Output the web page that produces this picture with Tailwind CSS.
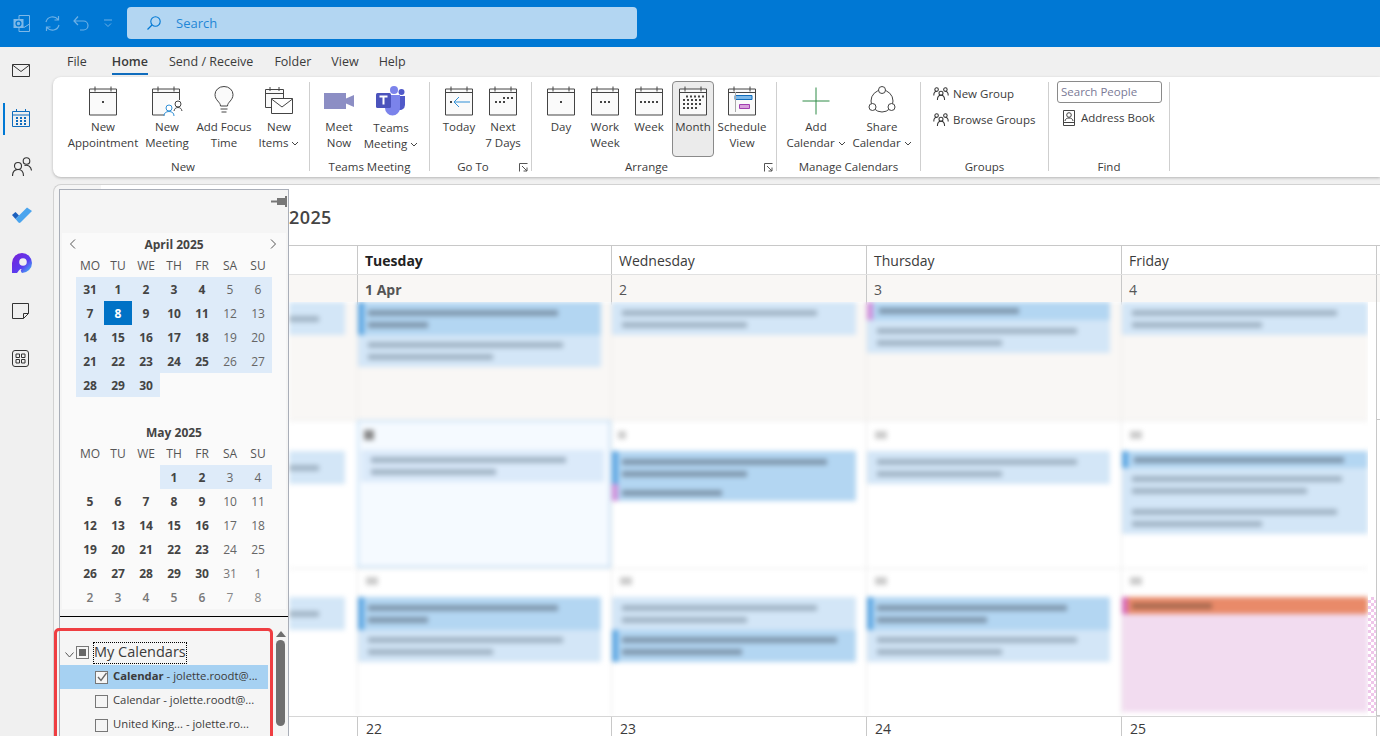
<!DOCTYPE html>
<html lang="en">
  <head>
    <meta charset="UTF-8" />
    <title>Calendar - Outlook</title>
    <script src="https://cdn.jsdelivr.net/npm/@tailwindcss/browser@4"></script>
  </head>
  <body class="h-[736px] w-[1380px] overflow-hidden bg-[#f0f0f0] font-['Open_Sans','Noto_Sans',sans-serif] text-[12px] text-[#3b3b3b]">
    <!-- Shared ribbon calendar outline -->
    <svg class="hidden">
      <symbol id="cal" viewBox="0 0 30 30">
        <path d="M2.5 5.5h27v26h-27z" transform="translate(-1 -2.5)" fill="#fafafa" stroke="#444" />
        <path d="M1.5 6.5h27M7 .5v5M23 .5v5" fill="none" stroke="#444" />
      </symbol>
      <symbol id="grp" viewBox="0 0 20 18">
        <g fill="none" stroke="#333" stroke-width="1.3">
          <circle cx="4.5" cy="3.5" r="2.2" /><circle cx="15.5" cy="3.5" r="2.2" /><circle cx="10" cy="8" r="2.5" />
          <path d="M1 11c0-3 1-5 3-5M19 11c0-3-1-5-3-5M5.5 16.5c0-3.500 2-6 4.500-6s4.500 2.500 4.500 6" />
        </g>
      </symbol>
      <symbol id="chev" viewBox="0 0 8 5"><path d="M1 1l3 3 3-3" fill="none" stroke="#444" /></symbol>
      <symbol id="launch" viewBox="0 0 9 9"><path d="M.5 8.500v-8h8M3 3l5 5M8 4.500V8H4.500" fill="none" stroke="#555" /></symbol>
    </svg>

    <!-- Title bar -->
    <header class="flex h-[47px] items-start bg-[#0078d4] pt-[7px]">
      <div class="flex h-[32px] w-[127px] items-center">
        <svg class="ml-[13px] h-[17px] w-[17px]" viewBox="0 0 17 17">
          <path d="M6 .5h10.500v16H6z" fill="none" stroke="#7db8e8" />
          <path d="M6 9l5 3.500L16.500 9" fill="none" stroke="#7db8e8" />
          <rect x=".5" y="4" width="10" height="9" fill="#7db8e8" />
          <circle cx="5.500" cy="8.500" r="2.400" fill="none" stroke="#0078d4" stroke-width="1.400" />
        </svg>
        <svg class="ml-[14px] h-[17px] w-[17px]" viewBox="0 0 17 17">
          <path d="M2 7a6.800 6.800 0 0 1 12-2.500M15 10a6.800 6.800 0 0 1-12 2.500M14.500 1v4h-4M2.500 16v-4h4" fill="none" stroke="#6cb0e6" stroke-width="1.200" />
        </svg>
        <svg class="ml-[12px] h-[17px] w-[17px]" viewBox="0 0 17 17">
          <path d="M1 6h9.500a4.500 4.500 0 0 1 0 9H7M5 1.500L1 6l4 4" fill="none" stroke="#6cb0e6" stroke-width="1.200" />
        </svg>
        <svg class="ml-[14px] h-[9px] w-[8px]" viewBox="0 0 8 9">
          <path d="M0 1h8M1 4.500l3 3 3-3" fill="none" stroke="#6cb0e6" />
        </svg>
      </div>
      <div class="flex h-[32px] w-[510px] items-center rounded-[4px] bg-[#b3d6f2]">
        <svg class="ml-[20px] h-[14px] w-[14px]" viewBox="0 0 14 14">
          <circle cx="8.500" cy="5.500" r="4.700" fill="none" stroke="#0078d4" stroke-width="1.100" />
          <path d="M5 9L.5 13.500" stroke="#0078d4" stroke-width="1.200" />
        </svg>
        <span class="ml-[15px] pt-[2px] text-[13px] text-[#1f86d6]">Search</span>
      </div>
    </header>

    <div class="flex h-[689px]">
      <!-- App rail -->
      <nav class="relative flex w-[53px] flex-col items-center">
        <span class="absolute top-[56px] left-[3px] h-[32px] w-[2px] bg-[#0078d4]"></span>
        <div class="mr-[9px] w-[20px] pt-[17px]">
          <svg class="h-[13px] w-[18px]" viewBox="0 0 18 13"><path d="M.5.500h17v12H.500zM.5 1l8.500 6.500L17.500 1" fill="none" stroke="#333" /></svg>
        </div>
        <div class="mt-[32px] mr-[9px] w-[20px]">
          <svg class="h-[18px] w-[18px]" viewBox="0 0 18 18">
            <path d="M.5 2.500h17v15H.5zM.5 6h17M4.500 0v3M13.500 0v3" fill="none" stroke="#0f6cbd" />
            <path d="M4 8h2v2H4zM8 8h2v2H8zM12 8h2v2h-2zM4 11h2v2H4zM8 11h2v2H8zM12 11h2v2h-2zM4 14h2v2H4zM8 14h2v2H8zM12 14h2v2h-2z" fill="#0f6cbd" />
          </svg>
        </div>
        <div class="mt-[30px] mr-[9px] w-[20px]">
          <svg class="h-[20px] w-[20px]" viewBox="0 0 20 20">
            <g fill="none" stroke="#333" stroke-width="1.100"><circle cx="6" cy="9" r="3.500" /><circle cx="14.500" cy="4" r="3.300" /><path d="M.5 19c0-4 2-6.500 5.500-6.500s5.500 2.500 5.500 6.500M12.500 8.500c3.500-1 6.500 1 7 5" /></g>
          </svg>
        </div>
        <div class="mt-[30px] mr-[9px] w-[20px]">
          <svg class="h-[16px] w-[20px]" viewBox="0 0 20 16">
            <path d="M0 8l3.500-3L7 8.500 3.500 12z" fill="#1b5fbd" />
            <path d="M3.500 12L7 8.500 15 .5l5 3.500-11.500 11.500c-1 .7-1.500.5-2 0z" fill="#4aa4ee" />
          </svg>
        </div>
        <div class="mt-[30px] mr-[9px] w-[20px]">
          <svg class="h-[20px] w-[20px]" viewBox="0 0 20 20">
            <defs><linearGradient id="lp" x1="0" y1="0" x2="1" y2="1"><stop offset="0" stop-color="#7a1fd6" /><stop offset=".6" stop-color="#5a3df0" /><stop offset="1" stop-color="#3fd0f5" /></linearGradient></defs>
            <path d="M0 20V10a10 10 0 1 1 10 10c-2-2.500-1-3.500 0-4-3 0-3 2-5 4z" fill="url(#lp)" />
            <circle cx="11" cy="9" r="3.800" fill="#f0f0f0" />
          </svg>
        </div>
        <div class="mt-[30px] mr-[9px] w-[20px]">
          <svg class="h-[16px] w-[17px]" viewBox="0 0 17 16"><path d="M.5.500h16v10l-5 5H.5zM16.500 10.500h-5v5" fill="none" stroke="#333" /></svg>
        </div>
        <div class="mt-[31px] mr-[9px] w-[20px]">
          <svg class="h-[17px] w-[17px]" viewBox="0 0 17 17"><rect x=".5" y=".5" width="16" height="16" rx="2.500" fill="none" stroke="#333" /><path d="M4 4h3.500v3.500H4zM9.500 4H13v3.500H9.500zM4 9.500h3.500V13H4zM9.500 9.500H13V13H9.500z" fill="none" stroke="#333" /></svg>
        </div>
      </nav>

      <div class="flex min-w-0 flex-1 flex-col">
        <!-- Tabs -->
        <div class="flex h-[30px] shrink-0 text-[12.500px] leading-[30px] text-[#3b3b3b]">
          <span class="ml-[14px]">File</span>
          <span class="relative ml-[25px] font-semibold">Home<span class="absolute right-0 bottom-[2px] left-0 h-[2px] bg-[#0f6cbd]"></span></span>
          <span class="ml-[21px]">Send / Receive</span>
          <span class="ml-[21px]">Folder</span>
          <span class="ml-[20px]">View</span>
          <span class="ml-[20px]">Help</span>
        </div>

        <!-- Ribbon -->
        <div class="flex h-[100px] shrink-0 rounded-l-[8px] bg-white pt-[5px] text-[11.500px] leading-[16px] shadow-[0_1px_3px_rgba(0,0,0,0.25)]">
          <section class="flex h-[89px] w-[257px] flex-col border-r border-[#cfcfcf] pl-[12px]">
            <div class="flex flex-1">
              <div class="flex w-[76px] flex-col items-center pt-[4px]">
                <svg class="h-[30px] w-[30px]" viewBox="0 0 30 30"><use href="#cal" /><rect x="14" y="15" width="2" height="2" fill="#444" /></svg>
                <span class="mt-[3px] text-center">New<br />Appointment</span>
              </div>
              <div class="flex w-[52px] flex-col items-center pt-[4px]">
                <svg class="h-[30px] w-[32px]" viewBox="0 0 32 30">
                  <use href="#cal" width="30" height="30" />
                  <rect x="17" y="14" width="15" height="16" fill="#fff" />
                  <circle cx="18" cy="22" r="3" fill="#fff" stroke="#2f8fd6" /><path d="M13 30c0-3 2-4.500 5-4.500s5 1.500 5 4.500" fill="#fff" stroke="#2f8fd6" />
                  <circle cx="27" cy="18" r="3" fill="none" stroke="#444" /><path d="M23 25c.5-2.500 2-3.500 4-3.500s3.500 1 4 3.500" fill="none" stroke="#444" />
                </svg>
                <span class="mt-[3px] text-center">New<br />Meeting</span>
              </div>
              <div class="flex w-[62px] flex-col items-center pt-[4px]">
                <svg class="h-[30px] w-[22px]" viewBox="0 0 22 30">
                  <path d="M7.500 20c0-4-5.500-5.500-5.500-11.500a9 8 0 0 1 18 0c0 6-5.500 7.500-5.500 11.500zM7.500 23h7M8.500 26h5" fill="#fafafa" stroke="#444" />
                </svg>
                <span class="mt-[3px] text-center whitespace-nowrap">Add Focus<br />Time</span>
              </div>
              <div class="flex w-[48px] flex-col items-center pt-[4px]">
                <svg class="h-[30px] w-[30px]" viewBox="0 0 30 30">
                  <path d="M1.500 3.500h18v18h-18zM1.500 7.500h18M6 1v4M15 1v4" fill="#fafafa" stroke="#444" />
                  <path d="M7.500 12.500h21v15h-21z" fill="#fff" stroke="#444" /><path d="M7.500 13l10.500 8 10.500-8" fill="none" stroke="#444" />
                </svg>
                <span class="mt-[3px] text-center whitespace-nowrap">New<br />Items <svg class="inline h-[5px] w-[8px]"><use href="#chev" /></svg></span>
              </div>
            </div>
            <div class="-mb-[4px] h-[16px] pr-[8px] text-center">New</div>
          </section>

          <section class="flex h-[89px] w-[120px] flex-col border-r border-[#cfcfcf] pl-[4px]">
            <div class="flex flex-1">
              <div class="flex w-[50px] flex-col items-center pt-[4px]">
                <svg class="h-[30px] w-[30px]" viewBox="0 0 30 30"><rect y="7" width="22" height="16" fill="#8c8ec4" /><path d="M22 12.500l8-3.500v12l-8-3.500z" fill="#8c8ec4" /></svg>
                <span class="mt-[3px] text-center">Meet<br />Now</span>
              </div>
              <div class="flex w-[54px] flex-col items-center pt-[4px]">
                <svg class="h-[30px] w-[30px]" viewBox="0 0 30 30">
                  <circle cx="18" cy="4" r="4" fill="#7b83eb" /><circle cx="25.500" cy="6" r="3" fill="#5059c9" />
                  <path d="M21 10h8v9a5 5 0 0 1-8 4z" fill="#5059c9" /><path d="M9 9h15v13a7.500 7.500 0 0 1-15 0z" fill="#7b83eb" />
                  <rect y="7" width="15" height="15" rx="1.500" fill="#4b53bc" />
                  <path d="M3.500 10.500h8M7.500 10.500v8" stroke="#fff" stroke-width="2" fill="none" />
                </svg>
                <span class="mt-[4px] text-center whitespace-nowrap">Teams<br />Meeting <svg class="inline h-[5px] w-[8px]"><use href="#chev" /></svg></span>
              </div>
            </div>
            <div class="-mb-[4px] h-[16px] pr-[4px] text-center whitespace-nowrap">Teams Meeting</div>
          </section>

          <section class="relative flex h-[89px] w-[102px] flex-col border-r border-[#cfcfcf] pl-[7px]">
            <div class="flex flex-1">
              <div class="flex w-[44px] flex-col items-center pt-[4px]">
                <svg class="h-[30px] w-[30px]" viewBox="0 0 30 30"><use href="#cal" /><rect x="6" y="15" width="2" height="2" fill="#444" /><path d="M26 16H10M15 11l-5 5 5 5" fill="none" stroke="#2f8fd6" /></svg>
                <span class="mt-[3px] text-center">Today</span>
              </div>
              <div class="flex w-[44px] flex-col items-center pt-[4px]">
                <svg class="h-[30px] w-[30px]" viewBox="0 0 30 30"><use href="#cal" /><path d="M15 11h2v2h-2zM19 11h2v2h-2zM23 11h2v2h-2zM7 15h2v2H7zM11 15h2v2h-2zM15 15h2v2h-2z" fill="#444" /></svg>
                <span class="mt-[3px] text-center whitespace-nowrap">Next<br />7 Days</span>
              </div>
            </div>
            <div class="-mb-[4px] h-[16px] pr-[22px] text-center whitespace-nowrap">Go To</div>
            <svg class="absolute right-[3px] bottom-[-1px] h-[9px] w-[9px]"><use href="#launch" /></svg>
          </section>

          <section class="relative flex h-[89px] w-[245px] flex-col border-r border-[#cfcfcf] pl-[7px]">
            <div class="flex flex-1">
              <div class="flex w-[44px] flex-col items-center pt-[4px]">
                <svg class="h-[30px] w-[30px]" viewBox="0 0 30 30"><use href="#cal" /><rect x="14" y="15" width="2" height="2" fill="#444" /></svg>
                <span class="mt-[3px] text-center">Day</span>
              </div>
              <div class="flex w-[44px] flex-col items-center pt-[4px]">
                <svg class="h-[30px] w-[30px]" viewBox="0 0 30 30"><use href="#cal" /><path d="M10 15h2v2h-2zM14 15h2v2h-2zM18 15h2v2h-2z" fill="#444" /></svg>
                <span class="mt-[3px] text-center">Work<br />Week</span>
              </div>
              <div class="flex w-[44px] flex-col items-center pt-[4px]">
                <svg class="h-[30px] w-[30px]" viewBox="0 0 30 30"><use href="#cal" /><path d="M6 15h2v2H6zM10 15h2v2h-2zM14 15h2v2h-2zM18 15h2v2h-2zM22 15h2v2h-2z" fill="#444" /></svg>
                <span class="mt-[3px] text-center">Week</span>
              </div>
              <div class="-mt-[1px] ml-[1px] flex h-[76px] w-[42px] flex-col items-center rounded-[4px] border border-[#8a8a8a] bg-[#ebebeb] pt-[4px]">
                <svg class="h-[30px] w-[30px]" viewBox="0 0 30 30"><use href="#cal" /><path d="M8 9.500h2v2H8zM12 9.500h2v2h-2zM16 9.500h2v2h-2zM20 9.500h2v2h-2zM24 9.500h2v2h-2zM5 13h2v2H5zM9 13h2v2H9zM13 13h2v2h-2zM17 13h2v2h-2zM21 13h2v2h-2zM5 17h2v2H5zM9 17h2v2H9zM13 17h2v2h-2zM17 17h2v2h-2zM21 17h2v2h-2zM5 21h2v2H5zM9 21h2v2H9zM13 21h2v2h-2zM17 21h2v2h-2z" fill="#444" /></svg>
                <span class="mt-[3px] text-center">Month</span>
              </div>
              <div class="ml-[1px] flex w-[54px] flex-col items-center pt-[4px]">
                <svg class="h-[30px] w-[30px]" viewBox="0 0 30 30"><use href="#cal" /><path d="M8 9.500h17v4H8z" fill="#7db8e8" stroke="#0f6cbd" /><path d="M12.500 18.500h10v4h-10z" fill="#d8a0dc" stroke="#a03eb0" /><path d="M8.500 6v20" stroke="#aaa" /></svg>
                <span class="mt-[3px] text-center">Schedule<br />View</span>
              </div>
            </div>
            <div class="-mb-[4px] h-[16px] pr-[22px] text-center">Arrange</div>
            <svg class="absolute right-[3px] bottom-[-1px] h-[9px] w-[9px]"><use href="#launch" /></svg>
          </section>

          <section class="flex h-[89px] w-[144px] flex-col border-r border-[#cfcfcf] pl-[10px]">
            <div class="flex flex-1">
              <div class="flex w-[58px] flex-col items-center pt-[4px]">
                <svg class="h-[30px] w-[30px]" viewBox="0 0 30 30"><path d="M15 1.500v27M1.500 15h27" stroke="#2e8b46" fill="none" /></svg>
                <span class="mt-[3px] text-center whitespace-nowrap">Add<br />Calendar <svg class="inline h-[5px] w-[8px]"><use href="#chev" /></svg></span>
              </div>
              <div class="ml-[7px] flex w-[60px] flex-col items-center pt-[4px]">
                <svg class="h-[30px] w-[30px]" viewBox="0 0 30 30"><g fill="#fff" stroke="#444"><circle cx="15" cy="15" r="11" fill="none" /><circle cx="15" cy="4" r="3.500" /><circle cx="5.500" cy="21" r="3.500" /><circle cx="24.500" cy="21" r="3.500" /></g></svg>
                <span class="mt-[3px] text-center whitespace-nowrap">Share<br />Calendar <svg class="inline h-[5px] w-[8px]"><use href="#chev" /></svg></span>
              </div>
            </div>
            <div class="-mb-[4px] h-[16px] pr-[10px] text-center whitespace-nowrap">Manage Calendars</div>
          </section>

          <section class="flex h-[89px] w-[128px] flex-col border-r border-[#cfcfcf] pl-[12px]">
            <div class="flex-1 pt-[2px]">
              <div class="flex h-[20px] items-center gap-[4px] whitespace-nowrap"><svg class="h-[16px] w-[16px]"><use href="#grp" /></svg>New Group</div>
              <div class="mt-[6px] flex h-[20px] items-center gap-[4px] whitespace-nowrap"><svg class="h-[16px] w-[16px]"><use href="#grp" /></svg>Browse Groups</div>
            </div>
            <div class="-mb-[4px] h-[16px] pr-[12px] text-center">Groups</div>
          </section>

          <section class="flex h-[89px] w-[121px] flex-col border-r border-[#cfcfcf] pl-[8px]">
            <div class="flex-1">
              <div class="-mt-[1px] flex h-[22px] w-[105px] items-center rounded-[3px] border border-[#8a8a8a] pl-[3px] text-[#7a7a96]">Search People</div>
              <div class="mt-[5px] flex h-[20px] items-center gap-[6px] pl-[6px] whitespace-nowrap">
                <svg class="h-[16px] w-[12px]" viewBox="0 0 12 16"><path d="M.5.500h11v15H.5zM.5 12.500h11" fill="none" stroke="#444" /><circle cx="6" cy="5" r="2.300" fill="none" stroke="#444" /><path d="M2 11c0-2 2-3 4-3s4 1 4 3" fill="none" stroke="#444" /></svg>
                Address Book
              </div>
            </div>
            <div class="-mb-[4px] h-[16px] pr-[8px] text-center">Find</div>
          </section>
        </div>

        <!-- Main area -->
        <main class="relative mt-[7px] flex min-h-0 flex-1 rounded-tl-[8px] border-t border-l border-[#d2d2d2] bg-[#f5f5f5]">
          <div class="absolute top-0 left-[47px] h-[5px] w-[190px] bg-white"></div>

          <!-- Date navigator flyout -->
          <aside class="relative mt-[4px] ml-[5px] flex w-[230px] shrink-0 flex-col border-x border-t border-[#a9aeb8] bg-[#f5f5f5]">
            <svg class="absolute top-[6px] right-[1px] h-[11px] w-[16px]" viewBox="0 0 16 11"><path d="M0 5.500h6" stroke="#777" stroke-width="2" /><path d="M6 2h8v7H6zM14 0h2v11h-2z" fill="#777" /></svg>
            <div class="mx-[2px] mt-[43px] h-[376px] shrink-0 bg-[#fafafa] pl-[14px]">
              <div class="relative h-[22px] w-[196px] text-center leading-[24px] font-bold text-[#444]">
                <svg class="absolute top-[6px] -left-[7px] h-[10px] w-[7px]" viewBox="0 0 7 10"><path d="M6 .5L1.500 5 6 9.500" fill="none" stroke="#555" /></svg>
                April 2025
                <svg class="absolute top-[6px] -right-[5px] h-[10px] w-[7px]" viewBox="0 0 7 10"><path d="M1 .5L5.500 5 1 9.500" fill="none" stroke="#555" /></svg>
              </div>
              <div class="mini-head grid h-[22px] w-[196px] grid-cols-7 text-center leading-[22px] text-[#555]"><span>MO</span><span>TU</span><span>WE</span><span>TH</span><span>FR</span><span>SA</span><span>SU</span></div>
              <div id="april" class="grid h-[144px] w-[196px] grid-cols-7 grid-rows-6 text-center leading-[26px]"></div>
              <div class="h-[22px] w-[196px] text-center leading-[24px] font-bold text-[#444]">May 2025</div>
              <div class="mini-head grid h-[22px] w-[196px] grid-cols-7 text-center leading-[22px] text-[#555]"><span>MO</span><span>TU</span><span>WE</span><span>TH</span><span>FR</span><span>SA</span><span>SU</span></div>
              <div id="may" class="grid h-[144px] w-[196px] grid-cols-7 grid-rows-6 text-center leading-[26px]"></div>
            </div>
            <div class="mt-[7px] h-[1px] shrink-0 bg-black"></div>

            <!-- Calendar list, with the red annotation box over it -->
            <div class="relative min-h-0 flex-1">
              <div class="absolute top-[11px] -left-[6px] h-[120px] w-[219px] rounded-[5px] border-[3px] border-[#ef3e42]"></div>
              <div class="flex h-[48px] items-end pb-[1px] pl-[5px] text-[14.500px]">
                <svg class="mb-[6px] h-[6px] w-[9px]" viewBox="0 0 9 6"><path d="M.5.500L4.500 5l4-4.500" fill="none" stroke="#555" /></svg>
                <span class="mb-[5px] ml-[2px] flex h-[13px] w-[13px] items-center justify-center border border-[#777]"><span class="h-[7px] w-[7px] bg-[#666]"></span></span>
                <span class="ml-[4px] border border-dotted border-black pb-[2px] leading-[18px]">My Calendars</span>
              </div>
              <div class="flex h-[24px] w-[208px] items-center bg-[#a6d1f2] pl-[35px] whitespace-nowrap">
                <span class="flex h-[13px] w-[13px] items-center justify-center border border-[#777] bg-[#f5f5f5]"><svg class="h-[10px] w-[10px]" viewBox="0 0 10 10"><path d="M1 5l3 3.500L9.500 1" fill="none" stroke="#666" stroke-width="1.300" /></svg></span>
                <span class="ml-[5px] pb-[2px] text-[11.300px]"><b>Calendar</b> - jolette.roodt@...</span>
              </div>
              <div class="flex h-[24px] items-center pl-[35px] whitespace-nowrap">
                <span class="h-[13px] w-[13px] border border-[#777]"></span>
                <span class="ml-[5px] pb-[2px] text-[11.300px]">Calendar - jolette.roodt@...</span>
              </div>
              <div class="flex h-[24px] items-center pl-[35px] whitespace-nowrap">
                <span class="h-[13px] w-[13px] border border-[#777]"></span>
                <span class="ml-[5px] pb-[2px] text-[11.300px]">United King... - jolette.ro...</span>
              </div>
              <div class="absolute top-[14px] right-[3px] flex w-[9px] flex-col items-center">
                <span class="h-0 w-0 border-x-[5px] border-b-[6px] border-x-transparent border-b-[#6f6f6f]"></span>
                <span class="mt-[3px] h-[86px] w-[9px] rounded-full bg-[#707070]"></span>
              </div>
            </div>
          </aside>

          <!-- Month view -->
          <div class="flex w-[1091px] shrink-0 flex-col bg-white">
            <div class="flex h-[60px] shrink-0 items-center pt-[4px] text-[18px] font-semibold tracking-[0.4px] text-[#444]">2025</div>
            <div class="grid h-[29px] shrink-0 grid-cols-[68px_254px_255px_255px_255px_4px] border-t border-[#c8c8c8] text-[14px] leading-[30px]">
              <div></div>
              <div class="border-l border-[#c8c8c8] pl-[7px] font-bold text-[#222]">Tuesday</div>
              <div class="border-l border-[#c8c8c8] pl-[7px]">Wednesday</div>
              <div class="border-l border-[#c8c8c8] pl-[7px]">Thursday</div>
              <div class="border-l border-[#c8c8c8] pl-[7px]">Friday</div>
              <div class="border-l border-[#c8c8c8]"></div>
            </div>
            <div class="grid h-[28px] shrink-0 grid-cols-[68px_254px_255px_255px_255px_4px] border-t border-[#e1e1e1] bg-[#f9f7f5] text-[14px] leading-[30px] text-[#555]">
              <div></div>
              <div class="border-l border-[#c8c8c8] pl-[7px] font-bold">1 Apr</div>
              <div class="border-l border-[#c8c8c8] pl-[7px]">2</div>
              <div class="border-l border-[#c8c8c8] pl-[7px]">3</div>
              <div class="border-l border-[#c8c8c8] pl-[7px]">4</div>
              <div class="border-l border-[#c8c8c8]"></div>
            </div>

            <div class="flex h-[414px] shrink-0">
              <!-- Blurred part of the month -->
              <div class="w-[1079px] overflow-hidden">
                <div class="grid grid-cols-[68px_254px_255px_255px_247px] grid-rows-[118px_148px_148px] blur-[2.500px]">
                  <!-- week 1 -->
                  <div class="bg-[#f9f7f5]"><div class="flex h-[33px] w-[56px] flex-col justify-center gap-[6px] bg-[#d3e6f7]"><i class="h-[6px] w-[30px] bg-[#a2b5c6]"></i></div></div>
                  <div class="border-l border-[#eceae8] bg-[#f9f7f5]">
                    <div class="flex h-[33px] w-[243px] flex-col justify-center gap-[6px] border-l-[6px] border-[#5ea8e4] bg-[#b3d6f2] pl-[4px]"><i class="h-[6px] w-[190px] bg-[#8098ae]"></i><i class="h-[6px] w-[60px] bg-[#8098ae]"></i></div>
                    <div class="flex h-[32px] w-[243px] flex-col justify-center gap-[6px] bg-[#d3e6f7] pl-[10px]"><i class="h-[6px] w-[195px] bg-[#a2b5c6]"></i><i class="h-[6px] w-[125px] bg-[#a2b5c6]"></i></div>
                  </div>
                  <div class="border-l border-[#eceae8] bg-[#f9f7f5]">
                    <div class="flex h-[33px] w-[244px] flex-col justify-center gap-[6px] bg-[#d3e6f7] pl-[10px]"><i class="h-[6px] w-[195px] bg-[#a2b5c6]"></i><i class="h-[6px] w-[125px] bg-[#a2b5c6]"></i></div>
                  </div>
                  <div class="border-l border-[#eceae8] bg-[#f9f7f5]">
                    <div class="flex h-[18px] w-[243px] items-center border-l-[6px] border-[#d18fdc] bg-[#b3d6f2] pl-[6px]"><i class="h-[6px] w-[140px] bg-[#8098ae]"></i></div>
                    <div class="flex h-[33px] w-[243px] flex-col justify-center gap-[6px] bg-[#d3e6f7] pl-[10px]"><i class="h-[6px] w-[200px] bg-[#a2b5c6]"></i><i class="h-[6px] w-[125px] bg-[#a2b5c6]"></i></div>
                  </div>
                  <div class="border-l border-[#eceae8] bg-[#f9f7f5]">
                    <div class="flex h-[33px] flex-col justify-center gap-[6px] bg-[#d3e6f7] pl-[10px]"><i class="h-[6px] w-[205px] bg-[#a2b5c6]"></i><i class="h-[6px] w-[130px] bg-[#a2b5c6]"></i></div>
                  </div>
                  <!-- week 2 -->
                  <div class="border-t border-[#e8e8e8] pt-[30px]"><div class="flex h-[33px] w-[56px] flex-col justify-center gap-[6px] bg-[#d3e6f7]"><i class="h-[6px] w-[30px] bg-[#a2b5c6]"></i></div></div>
                  <div class="border-2 border-[#c9e2f7] bg-[#f5faff] pt-[28px]">
                    <i class="absolute mt-[-20px] ml-[5px] h-[10px] w-[10px] bg-[#888]"></i>
                    <div class="ml-[2px] flex h-[32px] w-[243px] flex-col justify-center gap-[6px] bg-[#dbeafa] pl-[10px]"><i class="h-[6px] w-[195px] bg-[#a2b5c6]"></i><i class="h-[6px] w-[125px] bg-[#a2b5c6]"></i></div>
                  </div>
                  <div class="border-t border-l border-[#e8e8e8] pt-[30px]">
                    <i class="absolute mt-[-20px] ml-[6px] h-[8px] w-[8px] bg-[#ccc]"></i>
                    <div class="flex h-[33px] w-[244px] flex-col justify-center gap-[6px] border-l-[6px] border-[#5ea8e4] bg-[#b3d6f2] pl-[4px]"><i class="h-[6px] w-[205px] bg-[#8098ae]"></i><i class="h-[6px] w-[125px] bg-[#8098ae]"></i></div>
                    <div class="flex h-[17px] w-[244px] items-center border-l-[6px] border-[#d18fdc] bg-[#b3d6f2] pl-[4px]"><i class="h-[6px] w-[100px] bg-[#8098ae]"></i></div>
                  </div>
                  <div class="border-t border-l border-[#e8e8e8] pt-[30px]">
                    <i class="absolute mt-[-20px] ml-[8px] h-[8px] w-[12px] bg-[#ccc]"></i>
                    <div class="flex h-[33px] w-[243px] flex-col justify-center gap-[6px] bg-[#d3e6f7] pl-[10px]"><i class="h-[6px] w-[200px] bg-[#a2b5c6]"></i><i class="h-[6px] w-[125px] bg-[#a2b5c6]"></i></div>
                  </div>
                  <div class="border-t border-l border-[#e8e8e8] pt-[30px]">
                    <i class="absolute mt-[-20px] ml-[8px] h-[8px] w-[12px] bg-[#ccc]"></i>
                    <div class="flex h-[17px] items-center border-l-[6px] border-[#5ea8e4] bg-[#b3d6f2] pl-[6px]"><i class="h-[6px] w-[210px] bg-[#8098ae]"></i></div>
                    <div class="flex h-[33px] flex-col justify-center gap-[6px] bg-[#d3e6f7] pl-[10px]"><i class="h-[6px] w-[210px] bg-[#a2b5c6]"></i><i class="h-[6px] w-[175px] bg-[#a2b5c6]"></i></div>
                    <div class="flex h-[33px] flex-col justify-center gap-[6px] bg-[#d3e6f7] pl-[10px]"><i class="h-[6px] w-[205px] bg-[#a2b5c6]"></i><i class="h-[6px] w-[130px] bg-[#a2b5c6]"></i></div>
                  </div>
                  <!-- week 3 -->
                  <div class="border-t border-[#e8e8e8] pt-[28px]"><div class="flex h-[33px] w-[56px] flex-col justify-center gap-[6px] bg-[#d3e6f7]"><i class="h-[6px] w-[30px] bg-[#a2b5c6]"></i></div></div>
                  <div class="border-t border-l border-[#e8e8e8] pt-[28px]">
                    <i class="absolute mt-[-20px] ml-[8px] h-[8px] w-[12px] bg-[#ccc]"></i>
                    <div class="flex h-[33px] w-[243px] flex-col justify-center gap-[6px] border-l-[6px] border-[#5ea8e4] bg-[#b3d6f2] pl-[4px]"><i class="h-[6px] w-[190px] bg-[#8098ae]"></i><i class="h-[6px] w-[60px] bg-[#8098ae]"></i></div>
                    <div class="flex h-[32px] w-[243px] flex-col justify-center gap-[6px] bg-[#d3e6f7] pl-[10px]"><i class="h-[6px] w-[195px] bg-[#a2b5c6]"></i><i class="h-[6px] w-[125px] bg-[#a2b5c6]"></i></div>
                  </div>
                  <div class="border-t border-l border-[#e8e8e8] pt-[28px]">
                    <i class="absolute mt-[-20px] ml-[8px] h-[8px] w-[12px] bg-[#ccc]"></i>
                    <div class="flex h-[33px] w-[244px] flex-col justify-center gap-[6px] bg-[#d3e6f7] pl-[10px]"><i class="h-[6px] w-[195px] bg-[#a2b5c6]"></i><i class="h-[6px] w-[125px] bg-[#a2b5c6]"></i></div>
                    <div class="flex h-[32px] w-[244px] flex-col justify-center gap-[6px] border-l-[6px] border-[#5ea8e4] bg-[#b3d6f2] pl-[4px]"><i class="h-[6px] w-[215px] bg-[#8098ae]"></i><i class="h-[6px] w-[120px] bg-[#8098ae]"></i></div>
                  </div>
                  <div class="border-t border-l border-[#e8e8e8] pt-[28px]">
                    <i class="absolute mt-[-20px] ml-[8px] h-[8px] w-[12px] bg-[#ccc]"></i>
                    <div class="flex h-[33px] w-[243px] flex-col justify-center gap-[6px] border-l-[6px] border-[#5ea8e4] bg-[#b3d6f2] pl-[4px]"><i class="h-[6px] w-[190px] bg-[#8098ae]"></i><i class="h-[6px] w-[110px] bg-[#8098ae]"></i></div>
                    <div class="flex h-[32px] w-[243px] flex-col justify-center gap-[6px] bg-[#d3e6f7] pl-[10px]"><i class="h-[6px] w-[200px] bg-[#a2b5c6]"></i><i class="h-[6px] w-[125px] bg-[#a2b5c6]"></i></div>
                  </div>
                  <div class="border-t border-l border-[#e8e8e8] pt-[28px]">
                    <i class="absolute mt-[-20px] ml-[8px] h-[8px] w-[12px] bg-[#ccc]"></i>
                    <div class="flex h-[17px] items-center border-l-[6px] border-[#d96bb8] bg-[#e98a69] pl-[4px]"><i class="h-[6px] w-[80px] bg-[#a86a50]"></i></div>
                    <div class="h-[98px] bg-[#f2dcf0]"></div>
                  </div>
                </div>
              </div>
              <!-- Strip right of the blur -->
              <div class="flex w-[12px] flex-col pl-[8px]">
                <div class="h-[118px] border-b border-l border-[#c8c8c8]"></div>
                <div class="h-[148px] border-l border-[#c8c8c8]"></div>
                <div class="h-[148px] border-b border-l border-[#c8c8c8]"></div>
              </div>
            </div>

            <div class="grid h-[20px] shrink-0 grid-cols-[68px_254px_255px_255px_255px_4px] border-t border-[#d6d6d6] text-[14px] leading-[15px]">
              <div></div>
              <div class="border-l border-[#c8c8c8] pt-[4px] pl-[8px]">22</div>
              <div class="border-l border-[#c8c8c8] pt-[4px] pl-[8px]">23</div>
              <div class="border-l border-[#c8c8c8] pt-[4px] pl-[8px]">24</div>
              <div class="border-l border-[#c8c8c8] pt-[4px] pl-[8px]">25</div>
              <div class="border-l border-[#c8c8c8]"></div>
            </div>
          </div>
          <!-- Free/busy hatch beside Friday the 18th -->
          <div class="absolute top-[412px] left-[1314px] h-[116px] w-[8px] bg-[image:repeating-conic-gradient(#efc6ea_0_25%,#fff_0_50%)] bg-[length:6px_6px]"></div>
        </main>
      </div>
    </div>

    <script>
      const april = [
        [31, 1, 2, 3, 4, 5, 6],
        [7, 8, 9, 10, 11, 12, 13],
        [14, 15, 16, 17, 18, 19, 20],
        [21, 22, 23, 24, 25, 26, 27],
        [28, 29, 30],
      ];
      const may = [
        ["", "", "", 1, 2, 3, 4],
        [5, 6, 7, 8, 9, 10, 11],
        [12, 13, 14, 15, 16, 17, 18],
        [19, 20, 21, 22, 23, 24, 25],
        [26, 27, 28, 29, 30, 31, 1],
        [2, 3, 4, 5, 6, 7, 8],
      ];

      function renderMonth(id, rows, shaded) {
        const grid = document.getElementById(id);
        rows.forEach((row, r) => {
          row.forEach((day, c) => {
            const cell = document.createElement("span");
            cell.textContent = day;
            let cls = c > 4 ? "font-normal text-[#666]" : "font-bold text-[#444]";
            if (shaded(r, day)) cls += " bg-[#deebf9]";
            if (id === "april" && day === 8) cls = "font-bold text-white bg-[#0072c6]";
            if (id === "may" && r === 5) cls = c > 4 ? "font-normal text-[#888]" : "font-semibold text-[#777]";
            if (id === "may" && r === 4 && c > 4) cls = "font-normal text-[#777]";
            cell.className = cls;
            grid.appendChild(cell);
          });
        });
      }

      renderMonth("april", april, () => true);
      renderMonth("may", may, (r, day) => r === 0 && day !== "");
    </script>
  </body>
</html>
